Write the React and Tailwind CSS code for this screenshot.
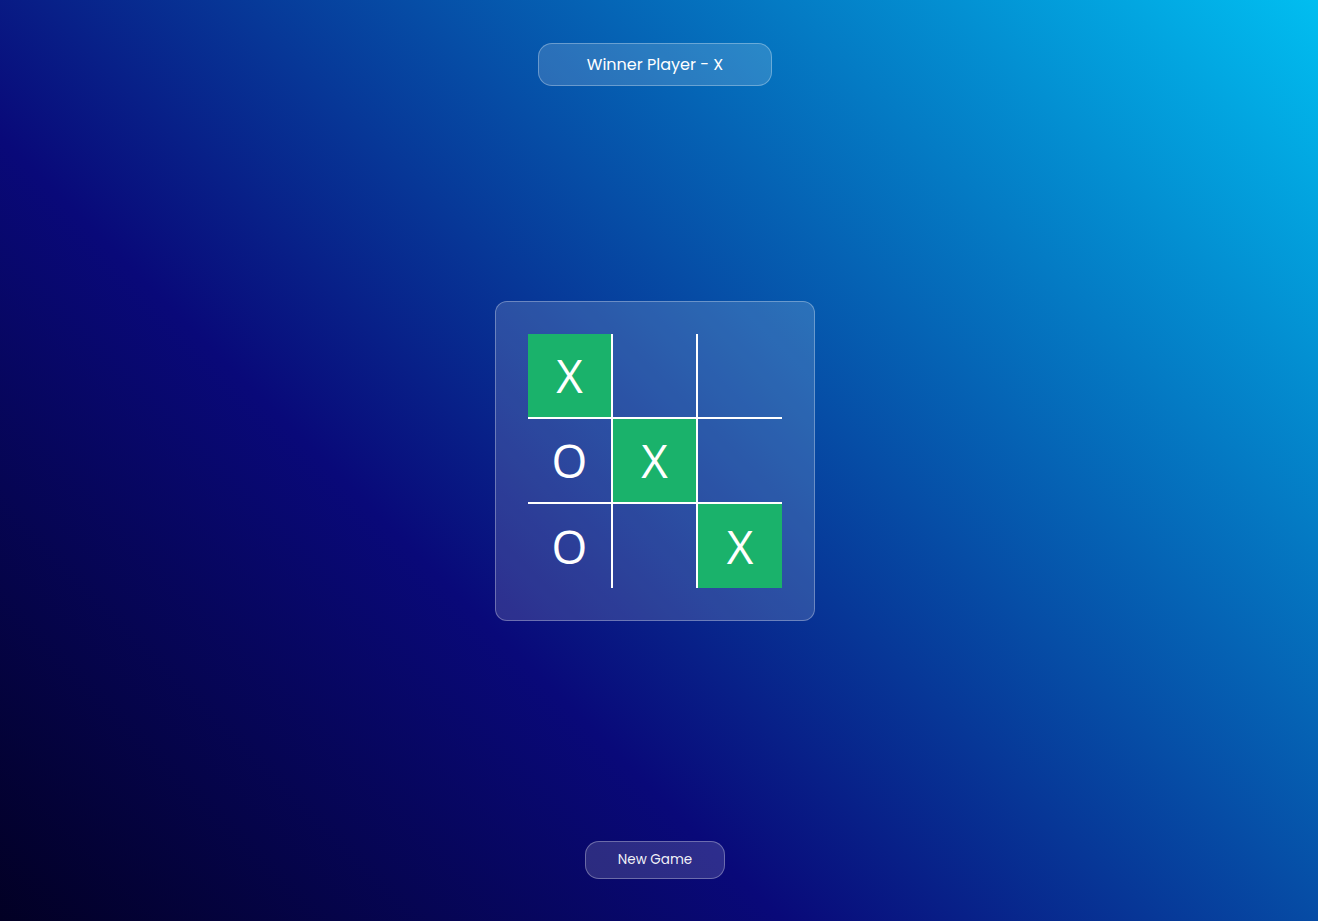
import React, { useState } from 'react'

const winLines = [
  [0, 1, 2], [3, 4, 5], [6, 7, 8],
  [0, 3, 6], [1, 4, 7], [2, 5, 8],
  [0, 4, 8], [2, 4, 6],
]

function findWinner(board) {
  for (const line of winLines) {
    const [a, b, c] = line
    if (board[a] && board[a] === board[b] && board[a] === board[c]) {
      return { player: board[a], line }
    }
  }
  return null
}

const startBoard = ['X', '', '', 'O', 'X', '', 'O', '', 'X']

export default function App() {
  const [board, setBoard] = useState(startBoard)
  const [turn, setTurn] = useState('O')

  const win = findWinner(board)

  const play = (i) => {
    if (board[i] || win) return
    const next = [...board]
    next[i] = turn
    setBoard(next)
    setTurn(turn === 'X' ? 'O' : 'X')
  }

  const reset = () => {
    setBoard(Array(9).fill(''))
    setTurn('X')
  }

  return (
    <div
      className="min-h-screen w-full flex flex-col items-center justify-between pt-[43px] pb-[42px] pr-[8px] bg-[linear-gradient(45deg,#020024_0%,#090979_35%,#00d4ff_108%)] text-white"
      style={{ fontFamily: 'Poppins, "Open Sans", sans-serif' }}
    >
      <div className="w-[234px] h-[43px] flex items-center justify-center rounded-[14px] border border-white/30 bg-white/15 text-[16px] text-white">
        {win ? `Winner Player - ${win.player}` : `Player ${turn} turn`}
      </div>

      <div className="w-[320px] h-[320px] mb-[6px] flex items-center justify-center rounded-xl border border-white/30 bg-white/15">
        <div className="grid grid-cols-[85px_85px_84px] grid-rows-[85px_85px_84px]">
          {board.map((cell, i) => {
            const row = Math.floor(i / 3)
            const col = i % 3
            const lit = win && win.line.includes(i)
            return (
              <button
                key={i}
                onClick={() => play(i)}
                className={`flex items-center justify-center border-white text-[46px] leading-none text-white ${
                  col < 2 ? 'border-r-2' : ''
                } ${row < 2 ? 'border-b-2' : ''} ${lit ? 'bg-[#1ab26b]' : ''}`}
                style={{ fontFamily: '"Open Sans", sans-serif' }}
              >
                {cell}
              </button>
            )
          })}
        </div>
      </div>

      <button
        onClick={reset}
        className="w-[140px] h-[38px] flex items-center justify-center rounded-[14px] border border-white/30 bg-white/15 text-[13.5px] text-white/95"
      >
        New Game
      </button>
    </div>
  )
}
